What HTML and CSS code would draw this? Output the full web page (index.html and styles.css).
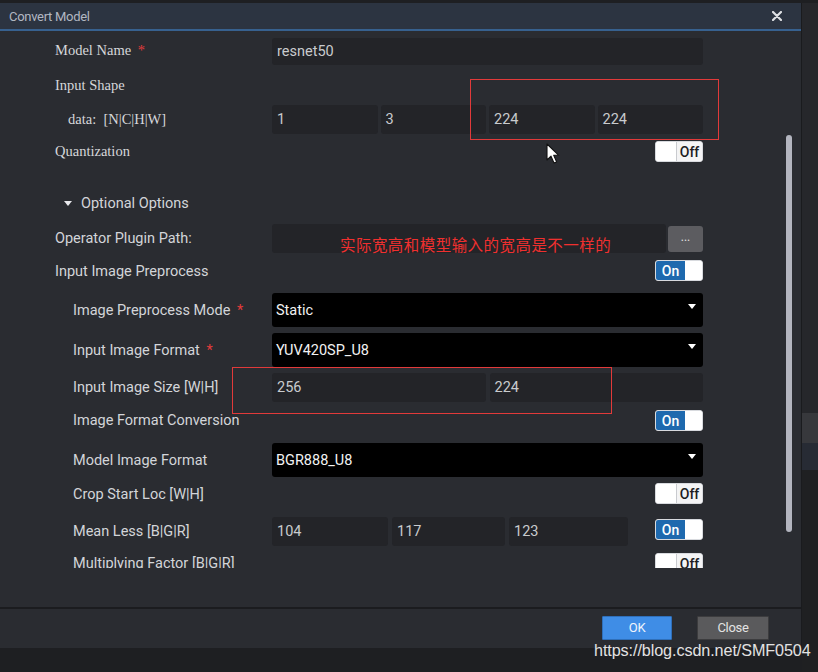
FILE: index.html
```html
<!DOCTYPE html>
<html>
<head>
<meta charset="utf-8">
<link rel="stylesheet" href="styles.css">
</head>
<body>
<div class="screen">
  <div class="dialog">
    <div class="titlebar">
      <span class="title">Convert Model</span>
      <svg class="close" width="10" height="10" viewBox="0 0 10 10"><path d="M1 1L9 9M9 1L1 9" stroke="#dfe1e5" stroke-width="2.2" stroke-linecap="round"/></svg>
    </div>
    <div class="body">
      <div class="scroll">
        <div class="form">
          <div class="row h-name mt-7">
            <div class="lbl serif up">Model Name <span class="req">*</span></div>
            <div class="ctl"><div class="input">resnet50</div></div>
          </div>
          <div class="row h-text mt-10">
            <div class="lbl serif">Input Shape</div>
          </div>
          <div class="row h-input mt-10">
            <div class="lbl serif sub">data:&nbsp; [N|C|H|W]</div>
            <div class="ctl grid4">
              <div class="input">1</div><div class="input">3</div><div class="input">224</div><div class="input">224</div>
            </div>
          </div>
          <div class="row h-toggle mt-7">
            <div class="lbl serif">Quantization</div>
            <div class="ctl end"><div class="toggle off"><span class="knob"></span><span class="txt">Off</span></div></div>
          </div>
          <div class="row h-text mt-31">
            <div class="lbl section"><span class="tri"></span>Optional Options</div>
          </div>
          <div class="row h-input mt-11">
            <div class="lbl">Operator Plugin Path:</div>
            <div class="ctl"><div class="input grow"></div><div class="dots">...</div></div>
          </div>
          <div class="row h-toggle mt-7">
            <div class="lbl down">Input Image Preprocess</div>
            <div class="ctl end"><div class="toggle on"><span class="txt">On</span><span class="knob"></span></div></div>
          </div>
          <div class="row h-select mt-12">
            <div class="lbl ind">Image Preprocess Mode <span class="req">*</span></div>
            <div class="ctl"><div class="select">Static<span class="arrow"></span></div></div>
          </div>
          <div class="row h-select mt-6">
            <div class="lbl ind">Input Image Format <span class="req">*</span></div>
            <div class="ctl"><div class="select">YUV420SP_U8<span class="arrow"></span></div></div>
          </div>
          <div class="row h-input mt-6">
            <div class="lbl ind">Input Image Size [W|H]</div>
            <div class="ctl grid2"><div class="input">256</div><div class="input">224</div></div>
          </div>
          <div class="row h-toggle mt-8">
            <div class="lbl ind">Image Format Conversion</div>
            <div class="ctl end"><div class="toggle on"><span class="txt">On</span><span class="knob"></span></div></div>
          </div>
          <div class="row h-select mt-12">
            <div class="lbl ind">Model Image Format</div>
            <div class="ctl"><div class="select">BGR888_U8<span class="arrow"></span></div></div>
          </div>
          <div class="row h-toggle mt-6">
            <div class="lbl ind down">Crop Start Loc [W|H]</div>
            <div class="ctl end"><div class="toggle off"><span class="knob"></span><span class="txt">Off</span></div></div>
          </div>
          <div class="row h-input mt-13">
            <div class="lbl ind">Mean Less [B|G|R]</div>
            <div class="ctl">
              <div class="grid3"><div class="input">104</div><div class="input">117</div><div class="input">123</div></div>
              <div class="toggle on push"><span class="txt">On</span><span class="knob"></span></div>
            </div>
          </div>
          <div class="row h-toggle mt-7">
            <div class="lbl ind">Multiplying Factor [B|G|R]</div>
            <div class="ctl end"><div class="toggle off"><span class="knob"></span><span class="txt">Off</span></div></div>
          </div>
        </div>
      </div>
      <div class="scrollbar"><div class="thumb"></div></div>
    </div>
    <div class="footer">
      <button class="btn ok">OK</button>
      <button class="btn cancel">Close</button>
    </div>
  </div>
  <div class="side">
    <div class="side-top"></div>
    <div class="side-light"></div>
    <div class="side-blue"></div>
    <div class="side-rest"></div>
  </div>

  <div class="mark mark-shape"></div>
  <div class="mark mark-size"></div>
  <div class="note">实际宽高和模型输入的宽高是不一样的</div>
  <svg class="cursor" width="14" height="22" viewBox="0 0 14 22"><path d="M1 1L1 17L5 13.2L8 20L10.6 18.9L7.7 12.3L12.8 12.3Z" fill="#ffffff" stroke="#111" stroke-width="1.1" stroke-linejoin="round"/></svg>
  <div class="watermark">https://blog.csdn.net/SMF0504</div>
</div>
</body>
</html>
```

FILE: styles.css
```css
* { box-sizing: border-box; }
html, body { margin: 0; padding: 0; }
body {
  background: #1e1f22;
  font-family: Roboto, "Noto Sans", Arial, sans-serif;
  width: 818px;
  height: 672px;
  overflow: hidden;
}
.screen {
  position: relative;
  display: flex;
  padding-top: 3px;
  width: 818px;
  height: 672px;
}
.dialog {
  width: 802px;
  height: 645px;
  display: flex;
  flex-direction: column;
  background: #2a2c31;
  border-right: 1px solid #1a1b1e;
  flex: none;
}
.titlebar {
  height: 28px;
  background: #2c3441;
  border-bottom: 2px solid #37618f;
  display: flex;
  align-items: center;
  justify-content: space-between;
  padding: 0 19px 0 9px;
  flex: none;
}
.title {
  color: #b2b7c1;
  font-size: 13px;
  letter-spacing: -0.3px;
}
.close { display: block; }
.body {
  height: 576px;
  display: flex;
  flex: none;
}
.scroll {
  width: 786px;
  height: 537px;
  overflow: hidden;
}
.form {
  padding-left: 55px;
  display: flex;
  flex-direction: column;
}
.scrollbar {
  width: 6px;
  padding-top: 104px;
  flex: none;
}
.thumb {
  width: 6px;
  height: 397px;
  background: #b3b5bf;
  border-radius: 3px;
}
.row {
  display: flex;
  align-items: center;
  flex: none;
}
.h-name { height: 27px; }
.h-text { height: 20px; }
.h-input { height: 29px; }
.h-select { height: 34px; }
.h-toggle { height: 21px; }
.mt-6 { margin-top: 6px; }
.mt-7 { margin-top: 7px; }
.mt-8 { margin-top: 8px; }
.mt-10 { margin-top: 10px; }
.mt-11 { margin-top: 11px; }
.mt-12 { margin-top: 12px; }
.mt-13 { margin-top: 13px; }
.mt-31 { margin-top: 31px; }

.lbl {
  width: 217px;
  flex: none;
  color: #d3d5d9;
  font-size: 14.5px;
  white-space: nowrap;
}
.lbl.up { margin-top: -3px; }
.lbl.down { margin-top: 2px; }
.lbl.serif {
  font-family: "Liberation Serif", "Times New Roman", serif;
  font-size: 14.5px;
  color: #d6d7da;
}
.lbl.sub { padding-left: 13px; font-size: 14.5px; }
.lbl.ind { padding-left: 18px; }
.lbl.section { display: flex; align-items: center; padding-left: 9px; }
.tri {
  width: 0; height: 0;
  border-left: 4.5px solid transparent;
  border-right: 4.5px solid transparent;
  border-top: 5px solid #e8e9ec;
  margin-right: 9px;
}
.req { color: #e23b3b; margin-left: 3px; }

.ctl {
  width: 431px;
  height: 100%;
  display: flex;
  align-items: center;
  flex: none;
}
.ctl.end { justify-content: flex-end; }
.input {
  height: 100%;
  background: #232428;
  border-radius: 3px;
  color: #c9cbce;
  font-size: 14.5px;
  display: flex;
  align-items: center;
  padding-left: 5px;
  width: 100%;
}
.input.grow { flex: 1; width: auto; }
.grid4 {
  display: grid;
  grid-template-columns: repeat(4, 1fr);
  gap: 3px;
}
.grid2 {
  display: grid;
  grid-template-columns: repeat(2, 1fr);
  gap: 4px;
}
.grid3 {
  width: 357px;
  height: 100%;
  display: grid;
  grid-template-columns: 116px 113px 119px;
  gap: 4px;
}
.dots {
  width: 35px;
  height: 26px;
  margin-left: 2px;
  background: #5c5c60;
  border-radius: 3px;
  color: #e4e4e4;
  font-size: 12px;
  display: flex;
  align-items: center;
  justify-content: center;
  padding-bottom: 4px;
}
.select {
  width: 100%;
  height: 100%;
  background: #000;
  border-radius: 3px;
  color: #f2f2f2;
  font-size: 14.5px;
  display: flex;
  align-items: center;
  padding-left: 4px;
  position: relative;
}
.arrow {
  margin-left: auto;
  margin-right: 7px;
  margin-top: -7px;
  width: 0; height: 0;
  border-left: 4px solid transparent;
  border-right: 4px solid transparent;
  border-top: 5px solid #ffffff;
}

.toggle {
  width: 48px;
  height: 21px;
  border-radius: 3px;
  background: #ffffff;
  border: 1px solid #d8dade;
  display: flex;
  overflow: hidden;
  flex: none;
  font-size: 14px;
  font-weight: 500;
}
.toggle.push { margin-left: auto; margin-top: -4px; }
.toggle.on .txt {
  width: 29px;
  background: #1e69ae;
  color: #ffffff;
  display: flex;
  align-items: center;
  justify-content: center;
}
.toggle.on .knob { flex: 1; background: #fff; }
.toggle.off .knob {
  width: 21px;
  background: #fff;
  border-right: 1px solid #c9cbcf;
}
.toggle.off .txt {
  flex: 1;
  background: #f4f4f5;
  color: #1d1d1f;
  display: flex;
  align-items: center;
  justify-content: center;
}

.footer {
  height: 41px;
  border-top: 2px solid #1b1c1f;
  background: #2a2c31;
  display: flex;
  align-items: center;
  justify-content: flex-end;
  padding: 0 32px 2px 0;
  gap: 25px;
  flex: none;
}
.btn {
  height: 24px;
  font-family: Roboto, Arial, sans-serif;
  font-size: 13px;
  border-radius: 1px;
  letter-spacing: -0.3px;
}
.btn.ok {
  width: 70px;
  background: #3f8de6;
  color: #eef4fc;
  border: 1px solid #2f6fb9;
}
.btn.cancel {
  width: 72px;
  background: #5a5a5c;
  color: #e3e3e3;
  border: 1px solid #3c3c3e;
}

.side {
  width: 16px;
  display: flex;
  flex-direction: column;
}
.side-top { height: 410px; background: #26272b; }
.side-light { height: 30px; background: #37383c; }
.side-blue { height: 27px; background: #272b34; }
.side-rest { flex: 1; background: #1f2022; }

.mark {
  position: absolute;
  border: 1px solid #e23a3a;
}
.mark-shape { left: 470px; top: 79px; width: 249px; height: 61px; }
.mark-size { left: 232px; top: 367px; width: 380px; height: 47px; }
.note {
  position: absolute;
  left: 340px;
  top: 234px;
  color: #f0302f;
  font-family: "Noto Sans CJK SC", "Noto Sans", sans-serif;
  font-size: 15.5px;
  line-height: 20px;
  letter-spacing: 0.45px;
}
.cursor {
  position: absolute;
  left: 546px;
  top: 143px;
}
.watermark {
  position: absolute;
  left: 594px;
  top: 641px;
  color: #e2e2e2;
  font-family: "Liberation Sans", Arial, sans-serif;
  font-size: 16.2px;
  letter-spacing: -0.1px;
  white-space: nowrap;
}
```
